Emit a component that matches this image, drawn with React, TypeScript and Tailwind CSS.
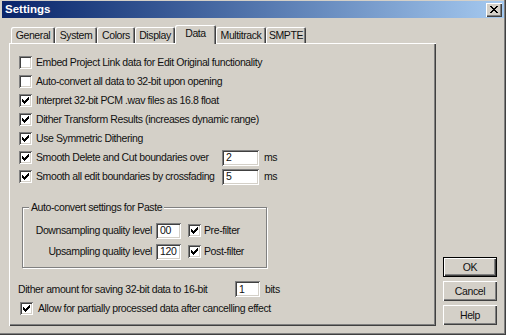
import React from "react";

const SUNKEN =
  "shadow-[inset_1px_1px_0_#808080,inset_-1px_-1px_0_#ffffff,inset_2px_2px_0_#404040,inset_-2px_-2px_0_#d4d0c8]";
const RAISED =
  "shadow-[inset_1px_1px_0_#ffffff,inset_-1px_-1px_0_#404040,inset_-2px_-2px_0_#808080]";

const CHECK_RECTS: [number, number, number][] = [
  [6, 0, 1],
  [5, 1, 2],
  [0, 2, 1],
  [4, 2, 3],
  [0, 3, 2],
  [3, 3, 3],
  [0, 4, 5],
  [1, 5, 3],
  [2, 6, 1],
];

function Check({ checked }: { checked?: boolean }) {
  return (
    <span className={`w-[13px] h-[13px] bg-white shrink-0 flex items-center justify-center ${SUNKEN}`}>
      {checked && (
        <svg width="7" height="7" viewBox="0 0 7 7" shapeRendering="crispEdges">
          {CHECK_RECTS.map(([x, y, w], i) => (
            <rect key={i} x={x} y={y} width={w} height={1} fill="#000" />
          ))}
        </svg>
      )}
    </span>
  );
}

function Field({ value, w }: { value: string; w: string }) {
  return (
    <span className={`${w} h-[16px] bg-white flex items-center pl-[4px] shrink-0 ${SUNKEN}`}>{value}</span>
  );
}

function Row({ checked, label }: { checked?: boolean; label: string }) {
  return (
    <div className="h-[19px] flex items-center gap-[4px]">
      <Check checked={checked} />
      <span>{label}</span>
    </div>
  );
}

function Btn({ label, def }: { label: string; def?: boolean }) {
  return (
    <div
      className={`w-[54px] h-[20px] flex items-center justify-center bg-[#d4d0c8] ${
        def
          ? "shadow-[inset_0_0_0_1px_#000,inset_2px_2px_0_#ffffff,inset_-2px_-2px_0_#404040,inset_-3px_-3px_0_#808080]"
          : RAISED
      }`}
    >
      {label}
    </div>
  );
}

const TABS = [
  { label: "General", w: "w-[44px]" },
  { label: "System", w: "w-[42px]" },
  { label: "Colors", w: "w-[38px]" },
  { label: "Display", w: "w-[40px]" },
  { label: "Data", w: "w-[41px]", sel: true },
  { label: "Multitrack", w: "w-[50px]" },
  { label: "SMPTE", w: "w-[40px]" },
];

export default function App() {
  return (
    <div className="w-[506px] h-[335px] bg-[#d4d0c8] flex flex-col font-['Liberation_Sans',Arial,sans-serif] text-[10.5px] tracking-[-0.4px] text-[#111] leading-none select-none pt-[1px] px-[2px] shadow-[inset_-1px_-1px_0_#404040,inset_-2px_-2px_0_#808080]">
      {/* title bar */}
      <div className="h-[17px] shrink-0 flex items-center justify-between bg-gradient-to-r from-[#0a246a] to-[#a6caf0] pl-[3px] pr-[2px]">
        <span className="text-white font-bold text-[11.5px] tracking-normal">Settings</span>
        <div className={`w-[16px] h-[14px] bg-[#d4d0c8] flex items-center justify-center ${RAISED}`}>
          <svg width="8" height="7" viewBox="0 0 8 7" shapeRendering="crispEdges">
            <path d="M0 0h2v1h-2zM6 0h2v1h-2zM1 1h2v1h-2zM5 1h2v1h-2zM2 2h4v1h-4zM3 3h2v1h-2zM2 4h4v1h-4zM1 5h2v1h-2zM5 5h2v1h-2zM0 6h2v1h-2zM6 6h2v1h-2z" fill="#000" />
          </svg>
        </div>
      </div>

      <div className="flex pl-[7px] pt-[7px]">
        <div className="flex flex-col w-[427px]">
          {/* tabs */}
          <div className="h-[18px] flex items-end pl-[2px]">
            {TABS.map((t) =>
              t.sel ? (
                <div
                  key={t.label}
                  className={`${t.w} h-[19px] -mb-px relative z-10 bg-[#d4d0c8] rounded-t-[2px] flex justify-center pt-[3px] shadow-[inset_1px_1px_0_#ffffff,inset_-1px_0_0_#404040,inset_-2px_0_0_#808080]`}
                >
                  {t.label}
                </div>
              ) : (
                <div
                  key={t.label}
                  className={`${t.w} h-[16px] bg-[#d4d0c8] rounded-t-[2px] flex items-center justify-center shadow-[inset_1px_1px_0_#ffffff,inset_-1px_0_0_#404040,inset_-2px_0_0_#808080]`}
                >
                  {t.label}
                </div>
              )
            )}
          </div>

          {/* panel */}
          <div className={`h-[283px] flex flex-col pl-[10px] pt-[10px] ${RAISED}`}>
            <Row label="Embed Project Link data for Edit Original functionality" />
            <Row label="Auto-convert all data to 32-bit upon opening" />
            <Row checked label="Interpret 32-bit PCM .wav files as 16.8 float" />
            <Row checked label="Dither Transform Results (increases dynamic range)" />
            <Row checked label="Use Symmetric Dithering" />
            <div className="h-[19px] flex items-center gap-[4px]">
              <Check checked />
              <span className="w-[182px]">Smooth Delete and Cut boundaries over</span>
              <Field value="2" w="w-[37px]" />
              <span className="ml-[1px]">ms</span>
            </div>
            <div className="h-[19px] flex items-center gap-[4px]">
              <Check checked />
              <span className="w-[182px]">Smooth all edit boundaries by crossfading</span>
              <Field value="5" w="w-[37px]" />
              <span className="ml-[1px]">ms</span>
            </div>

            {/* group box */}
            <div className="relative mt-[21px] ml-[3px] w-[245px] h-[61px] border border-[#808080] shadow-[1px_1px_0_#ffffff,inset_1px_1px_0_#ffffff] pt-[12px]">
              <span className="absolute left-[6px] -top-[6px] bg-[#d4d0c8] px-[2px]">
                Auto-convert settings for Paste
              </span>
              <div className="h-[21px] flex items-center">
                <span className="w-[129px] text-right">Downsampling quality level</span>
                <span className="ml-[4px]">
                  <Field value="00" w="w-[25px]" />
                </span>
                <span className="ml-[7px] flex items-center gap-[3px]">
                  <Check checked />
                  <span>Pre-filter</span>
                </span>
              </div>
              <div className="h-[21px] flex items-center">
                <span className="w-[129px] text-right">Upsampling quality level</span>
                <span className="ml-[4px]">
                  <Field value="120" w="w-[25px]" />
                </span>
                <span className="ml-[7px] flex items-center gap-[3px]">
                  <Check checked />
                  <span>Post-filter</span>
                </span>
              </div>
            </div>

            <div className="h-[20px] mt-[11px] -ml-px flex items-center">
              <span className="w-[217px]">Dither amount for saving 32-bit data to 16-bit</span>
              <Field value="1" w="w-[25px]" />
              <span className="ml-[5px]">bits</span>
            </div>
            <div className="h-[19px] ml-px flex items-center gap-[5px]">
              <Check checked />
              <span>Allow for partially processed data after cancelling effect</span>
            </div>
          </div>
        </div>

        {/* buttons */}
        <div className="flex flex-col gap-[4px] ml-[7px] mt-[232px]">
          <Btn label="OK" def />
          <Btn label="Cancel" />
          <Btn label="Help" />
        </div>
      </div>
    </div>
  );
}
